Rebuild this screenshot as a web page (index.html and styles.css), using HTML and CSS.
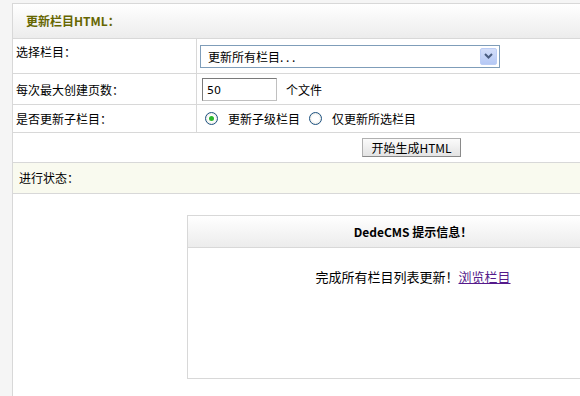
FILE: index.html
```html
<!DOCTYPE html>
<html>
<head>
<meta charset="utf-8">
<link rel="stylesheet" href="styles.css">
</head>
<body>
<div class="panel">
  <div class="head">更新栏目HTML：</div>
  <div class="row r1">
    <div class="lab">选择栏目：</div>
    <div class="val">
      <div class="select"><span class="sel-text">更新所有栏目. . .</span><span class="sel-btn"><svg width="9" height="6" viewBox="0 0 9 6"><path d="M1 1 L4.5 4.5 L8 1" fill="none" stroke="#4a5d80" stroke-width="2"/></svg></span></div>
    </div>
  </div>
  <div class="row r2">
    <div class="lab">每次最大创建页数：</div>
    <div class="val"><span class="input">50</span><span class="unit">个文件</span></div>
  </div>
  <div class="row r3">
    <div class="lab">是否更新子栏目：</div>
    <div class="val">
      <span class="radio on"></span><span class="rtext">更新子级栏目</span>
      <span class="radio"></span><span class="rtext">仅更新所选栏目</span>
    </div>
  </div>
  <div class="row r4">
    <span class="button">开始生成HTML</span>
  </div>
  <div class="status">进行状态：</div>
  <div class="msgbox">
    <div class="msghead">DedeCMS 提示信息！</div>
    <div class="msgbody">完成所有栏目列表更新！<a href="#">浏览栏目</a></div>
  </div>
</div>
</body>
</html>
```
FILE: styles.css
```css
html, body {
  margin: 0;
  padding: 0;
}
body {
  background: #f5f5f5;
  padding: 3px 0 0 12px;
  height: 396px;
  box-sizing: border-box;
  overflow: hidden;
  font-family: "Noto Sans CJK SC", "DejaVu Sans", sans-serif;
  font-size: 12px;
  color: #000;
}
.panel {
  width: 640px;
  height: 420px;
  background: #fff;
  border: 1px solid #d8d8d8;
  border-right: none;
}
.head {
  height: 34px;
  line-height: 34px;
  padding-left: 13px;
  font-weight: bold;
  color: #666600;
  background: linear-gradient(#ffffff, #ececec);
  border-bottom: 1px solid #d8d8d8;
}
.row {
  display: flex;
  border-bottom: 1px solid #d8d8d8;
}
.lab {
  width: 180px;
  padding-left: 3px;
  border-right: 1px solid #d8d8d8;
  display: flex;
  align-items: center;
}
.val {
  flex: 1;
  display: flex;
  align-items: center;
}
.r1 { height: 34px; }
.r1 .lab { align-items: flex-start; padding-top: 4px; }
.r2 { height: 30px; }
.r3 { height: 27px; }
.r4 {
  height: 29px;
  align-items: center;
  padding-left: 349px;
}
.select {
  margin-left: 3px;
  width: 300px;
  height: 23px;
  border: 1px solid #7f9db9;
  display: flex;
  align-items: center;
  justify-content: space-between;
  box-sizing: border-box;
}
.sel-text {
  padding-left: 7px;
}
.sel-btn {
  width: 17px;
  height: 17px;
  margin-right: 2px;
  background: linear-gradient(#d3def9, #b5c8f5);
  border: 1px solid #bccdf5;
  box-sizing: border-box;
  display: flex;
  align-items: center;
  justify-content: center;
  border-radius: 2px;
}
.input {
  margin-left: 5px;
  width: 75px;
  height: 23px;
  box-sizing: border-box;
  border: 1px solid #c0c0c0;
  border-top-color: #7a7a7a;
  border-left-color: #7a7a7a;
  padding: 5px 0 0 4px;
  line-height: 14px;
  font-family: "DejaVu Sans", sans-serif;
  font-size: 11px;
}
.unit { margin-left: 9px; }
.radio {
  width: 11px;
  height: 11px;
  border-radius: 50%;
  border: 1px solid #1c5180;
  background: radial-gradient(circle, #ffffff 40%, #dcdcd3 100%);
  position: relative;
  margin-left: 8px;
}
.radio.on::after {
  content: "";
  position: absolute;
  left: 3px;
  top: 3px;
  width: 5px;
  height: 5px;
  border-radius: 50%;
  background: #2bb82b;
}
.rtext { margin-left: 10px; }
.rtext + .radio { margin-left: 9px; }
.button {
  width: 99px;
  height: 19px;
  box-sizing: border-box;
  border: 1px solid #b0b0b0;
  border-right-color: #8a8a8a;
  border-bottom-color: #8a8a8a;
  background: linear-gradient(#fbfbfb, #e3e3e3);
  text-align: center;
  line-height: 17px;
}
.status {
  height: 30px;
  line-height: 30px;
  padding-left: 6px;
  background: #f9faef;
  border-bottom: 1px solid #d8d8d8;
}
.msgbox {
  margin: 21px 0 0 174px;
  width: 450px;
  border: 1px solid #d8d8d8;
}
.msghead {
  height: 31px;
  line-height: 31px;
  text-align: center;
  font-weight: bold;
  background: linear-gradient(#ffffff, #ececec);
  border-bottom: 1px solid #d8d8d8;
}
.msgbody {
  height: 130px;
  box-sizing: border-box;
  padding-top: 20px;
  text-align: center;
  line-height: 17px;
  font-size: 13px;
}
.msgbody a {
  color: #551a8b;
  text-decoration: underline;
}
```
